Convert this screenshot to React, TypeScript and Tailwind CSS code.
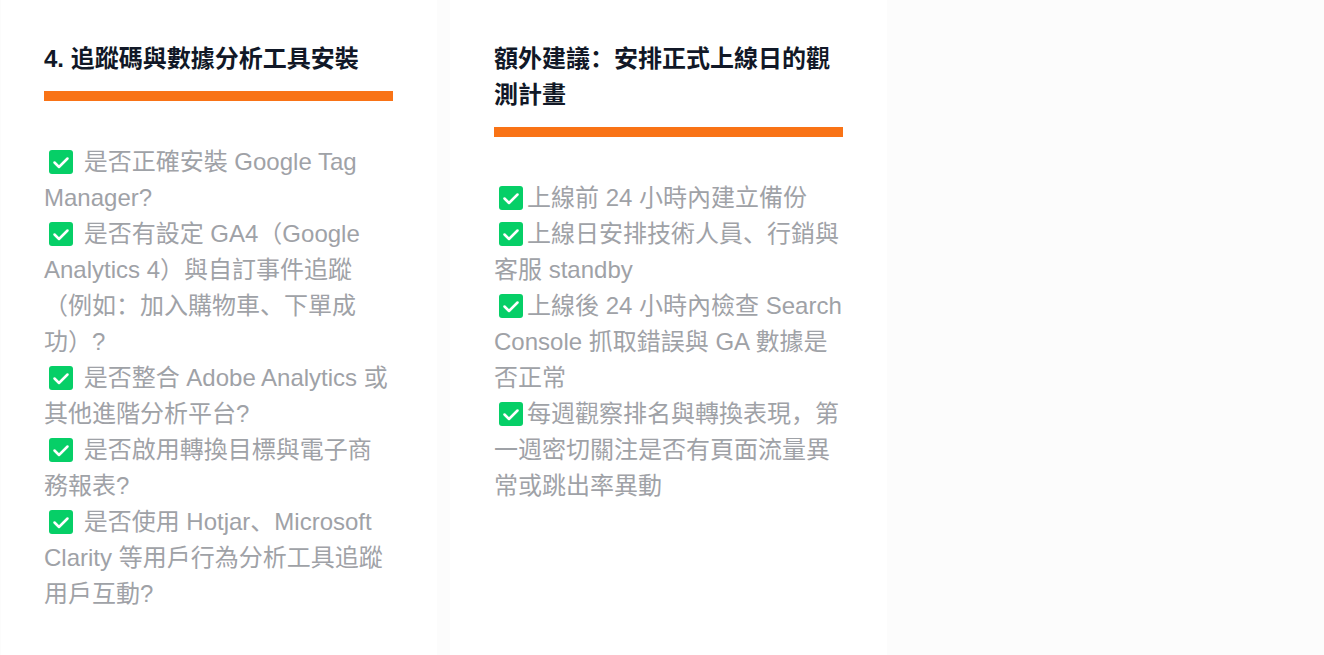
const SANS = "font-['Liberation_Sans','Noto_Sans_CJK_SC',sans-serif]"

function CheckIcon() {
  return (
    <span className="inline-block w-[33px] h-6 align-[-4px] pl-[5px]">
      <svg width="24" height="24" viewBox="0 0 24 24">
        <rect x="0" y="0" width="24" height="24" rx="3" fill="#06cf67" />
        <path d="M5.5 12.5 L10 17 L18.5 8.5" fill="none" stroke="#ffffff" strokeWidth="2.5" strokeLinecap="round" strokeLinejoin="round" />
      </svg>
    </span>
  )
}

const LEFT_ITEMS = [
  "是否正確安裝 Google Tag Manager?",
  "是否有設定 GA4（Google Analytics 4）與自訂事件追蹤（例如：加入購物車、下單成功）?",
  "是否整合 Adobe Analytics 或其他進階分析平台?",
  "是否啟用轉換目標與電子商務報表?",
  "是否使用 Hotjar、Microsoft Clarity 等用戶行為分析工具追蹤用戶互動?",
]

const RIGHT_ITEMS = [
  "上線前 24 小時內建立備份",
  "上線日安排技術人員、行銷與客服 standby",
  "上線後 24 小時內檢查 Search Console 抓取錯誤與 GA 數據是否正常",
  "每週觀察排名與轉換表現，第一週密切關注是否有頁面流量異常或跳出率異動",
]

function Column({ title, items, spaced }: { title: string; items: string[]; spaced?: boolean }) {
  return (
    <div className="w-[437px] first:w-[436px] h-full bg-white px-11 first:pl-[43px] pt-[41px]">
      <h2 className="text-2xl leading-9 font-bold text-[#111827]">{title}</h2>
      <div className="h-2.5 bg-[#f97316] mt-[14px] mb-[43px]" />
      <div className="text-2xl leading-9 text-[#9fa2a7]">
        {items.map((item) => (
          <div key={item}>
            <CheckIcon />
            {spaced ? " " : ""}
            {item}
          </div>
        ))}
      </div>
    </div>
  )
}

export default function App() {
  return (
    <div className={`${SANS} h-[655px] overflow-hidden bg-[#fcfcfc] flex gap-[13px] pl-px`}>
      <Column title="4. 追蹤碼與數據分析工具安裝" items={LEFT_ITEMS} spaced />
      <Column title="額外建議：安排正式上線日的觀測計畫" items={RIGHT_ITEMS} />
    </div>
  )
}
